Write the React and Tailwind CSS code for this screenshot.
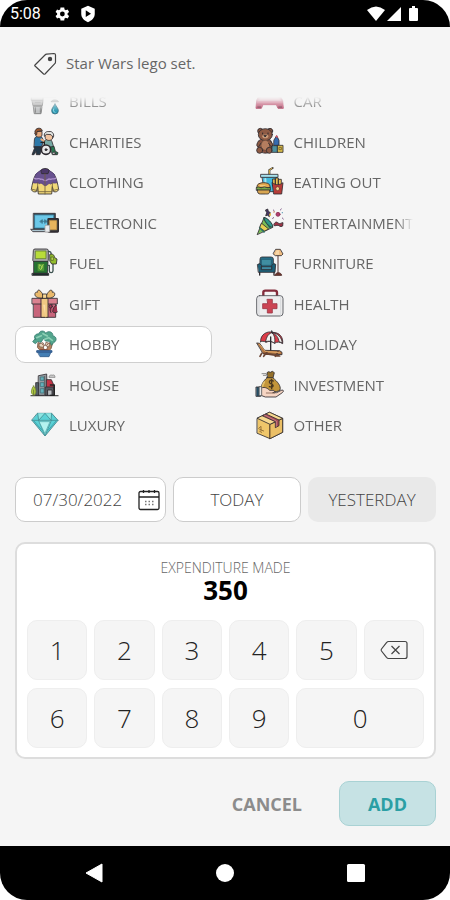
import { useState } from "react";

const art = {
  bills: (
    <>
      <path d="M38 30h36" stroke="#999" strokeWidth="3" />
      <path d="M2 24h34v16H2z" fill="#c8c8c8" stroke="#666" />
      <path d="M4 40h32l-2 16H7z" fill="#a5a5a5" stroke="#666" />
      <path d="M8 58h25l-3 22H11z" fill="#c0c2c3" stroke="#777" />
      <path d="M13 46h15M13 62v14M28 62v14" stroke="#777" />
      <path d="M61 43c3-6 18-6 21 0z" fill="#999" stroke="#777" />
      <path d="M72 51c-6 9-10 14-10 20a10 10 0 0 0 20 0c0-6-5-11-10-20z" fill="#2f9cb5" stroke="#3c6f80" />
      <path d="M68 66c-2 6 0 9 4 10" stroke="#a8e2ec" />
    </>
  ),
  charities: (
    <>
      <path d="M10 38c0-10 4-13 14-13s12 6 13 16l-6 17H10z" fill="#2d78a8" />
      <path d="M10 56h20v13l-3 11H16l-1-10-6 10H3l7-18z" fill="#253746" />
      <path d="M14 10h19v13c-5 6-13 6-18 1z" fill="#e5aa7e" />
      <path d="M12 13c-2-14 19-17 22-5l-16 3-1 9-5-2z" fill="#98572f" />
      <path d="M31 34l13 9" stroke="#e5aa7e" strokeWidth="6" />
      <path d="M42 37c6-6 18-5 21 4l5 16-11 5-17-1z" fill="#77a9a4" />
      <path d="M42 19c4-9 20-10 24 1l-2 13c-6 6-15 6-20 0z" fill="#f0c29e" />
      <path d="M40 24c-3-10 8-15 14-13 9-3 17 7 13 17l-7-8-13-1z" fill="#e5e7e4" />
      <path d="M58 57l11-2 4 15 8 4-2 6H65z" fill="#287650" />
      <path d="M30 43h10v17h17" stroke="#222" strokeWidth="4" />
      <circle cx="45" cy="65" r="14" fill="#e9e9e9" strokeWidth="5" />
      <circle cx="45" cy="65" r="3" fill="#222" />
      <circle cx="69" cy="76" r="4" fill="#ddd" />
    </>
  ),
  clothing: (
    <>
      <path d="M30 7l-15 11C8 28 3 50 1 65c3 6 9 8 15 6l4-15 2 22h40l2-22 4 15c6 2 12 0 15-6C81 50 76 28 69 18L54 7z" fill="#f0d878" />
      <path d="M29 7L15 18 6 44c8 3 14-2 20 3 8-5 10 6 17 6s9-10 16-5c6-6 12-1 19-4l-9-26L54 7z" fill="#68518f" stroke="#55417c" />
      <path d="M11 31c8 5 12-3 18 3 6-3 10 5 14 4 7 0 8-8 15-4 6-4 12 1 16-3" stroke="#ad91ca" strokeWidth="4" />
      <path d="M30 8c0-9 24-9 24 0l-3 9H33z" fill="#4b3768" />
      <path d="M42 18v60M20 44v26M64 44v26M22 71h40M4 64l12 3M80 64l-12 3" stroke="#71613c" />
    </>
  ),
  electronic: (
    <>
      <path d="M8 13h65v48H8z" fill="#344853" />
      <path d="M12 18h56v39H12z" fill="#6cc8e8" stroke="#3d86a3" />
      <path d="M0 61h73v7H7z" fill="#abc5d0" />
      <path d="M27 37l7-5v10zM48 37l-7-5v10zM34 37h12" fill="#3d7890" stroke="#3d7890" />
      <rect x="51" y="29" width="31" height="40" rx="2" fill="#393b3f" strokeWidth="4" />
      <path d="M56 35h21v27H56z" fill="#e7b45c" stroke="#c69648" />
      <rect x="42" y="49" width="14" height="20" rx="2" fill="#e9ebed" stroke="#aaa" />
    </>
  ),
  fuel: (
    <>
      <path d="M7 4q0-4 5-4h34q6 0 6 5v29l-3 5H9l-3-4z" fill="#aaa" />
      <path d="M14 6h31v23H14z" fill="#b8dc39" stroke="#64802d" />
      <path d="M9 37h42l-2 36H9z" fill="#267335" />
      <path d="M19 43h22v24H19z" fill="#4e9936" stroke="#2c6c2c" />
      <path d="M25 48c11 0 8 12 4 13-8-2-3-11-4-13m11-1c-5 6-1 8-6 14" stroke="#b9dc5d" />
      <path d="M4 73h49v6H4z" fill="#192d2b" />
      <path d="M52 7c8 0 8 3 9 11M51 49h4v17c0 6 10 7 11 0V45" stroke="#3d5250" strokeWidth="4" />
      <path d="M57 16c8-3 13 2 14 10l7 4-2 15H62l-5-8z" fill="#92bc2c" />
      <path d="M61 24h6v10h-6z" fill="#cae55c" stroke="#566a26" />
    </>
  ),
  gift: (
    <>
      <path d="M8 40h66v42H8z" fill="#c8657b" />
      <path d="M4 25h75v17H4z" fill="#da8290" />
      <path d="M31 25h20v57H31z" fill="#f0c883" />
      <path d="M36 43h8v38" fill="#fadda8" stroke="#efc681" />
      <path d="M39 20C28-3 20-4 19 7c-8-3-9 8-5 12 7 6 19 7 27 2zm5 0C55-3 64-4 64 7c8-3 9 8 5 12-7 6-19 7-27 2z" fill="#e9b96b" />
      <path d="M36 12h11v13H36z" fill="#f6d795" />
      <path d="M63 43c-7 8-8 19-3 25M77 45c-8 4-11 10-12 20 4 5 11 4 14 1" fill="#9f334e" />
      <circle cx="59" cy="49" r="5" fill="#ad3959" />
    </>
  ),
  hobby: (
    <>
      <path d="M22 35l12 3 5 18h8l7-20 12-3-6 20-7 7H29l-9-10z" fill="#b9845f" stroke="#72533f" />
      <path d="M14 25C4 19 15 6 24 9 25-5 45 0 43 7 53-3 68 4 65 14c14 3 12 17 4 20l-8 9-5-12-13-1-5-8-8 12-9-3-8 7-8-6 9-11z" fill="#53a58d" stroke="#377e72" />
      <path d="M17 20l14-6m5-6l13 7m-8 10l12-5 11 8" stroke="#8dd0b5" strokeWidth="5" />
      <path d="M25 38l11-3 5 9-7 5-9-2zm21-4l11 4-4 10-9-4z" fill="#e5d4bc" stroke="#7e6352" />
      <path d="M28 55l24 2M34 39l3 4M51 38l-4 5" stroke="#7b3e34" />
      <path d="M19 60h42l-7 17H28z" fill="#437eb4" stroke="#315c8b" />
      <path d="M18 59h45v5H18z" fill="#3967a4" stroke="#315c8b" />
    </>
  ),
  house: (
    <>
      <path d="M0 74h81" stroke="#555" strokeWidth="4" />
      <path d="M23 14l24-5 2 64H22z" fill="#969da3" />
      <path d="M15 35h8v38h-8z" fill="#535e67" />
      <path d="M29 18h10v10H29zm0 17h10v12H29zm0 18h10v13H29z" fill="#64b1bb" stroke="#41737c" />
      <path d="M41 16v56" stroke="#555" />
      <path d="M47 26h14l7 15v14H47z" fill="#c33446" />
      <path d="M44 48h24v25H44z" fill="#565960" />
      <path d="M51 57h12v16H51z" fill="#b9bcc0" />
      <path d="M58 42h12v31H58" stroke="#222" strokeWidth="4" />
      <path d="M8 45c-9 10-9 26 0 26s9-16 0-26z" fill="#b3cb43" stroke="#71862f" />
      <path d="M8 57v17" stroke="#5f7031" />
      <path d="M54 18c0-5 6-8 9-5 6-3 9 0 9 5z" fill="#ccc" stroke="#888" />
    </>
  ),
  luxury: (
    <>
      <path d="M20 4h42l19 21-39 47L3 25z" fill="#5bd1d5" stroke="#427e85" />
      <path d="M20 4l3 21L42 4l18 21 2-21M3 25h78M23 25l19 47 19-47" fill="#8ce5e2" stroke="#438e94" />
      <path d="M25 29h32L42 64z" fill="#b5f3ef" stroke="#5aaeb1" />
      <path d="M9 27l23 27M75 27L52 54" stroke="#379ea8" />
    </>
  ),
  car: (
    <>
      <path d="M10 25h62l8 16 2 23H66l-5-11H21l-5 11H0l2-23z" fill="#c4476b" stroke="#a83558" />
      <path d="M15 30h52l8 11H7z" fill="#dc93a7" stroke="#cd7f95" />
      <path d="M2 48h78v6H2z" fill="#b83b5e" stroke="none" />
      <path d="M4 56h11v7H4zm63 0h11v7H67z" fill="#853049" stroke="none" />
    </>
  ),
  children: (
    <>
      <circle cx="13" cy="9" r="8" fill="#86543f" />
      <circle cx="42" cy="9" r="8" fill="#86543f" />
      <path d="M12 35C5 43 4 58 9 67c9 11 28 11 36 1 6-10 5-24-3-33z" fill="#875241" />
      <ellipse cx="28" cy="20" rx="21" ry="18" fill="#8f5b44" />
      <ellipse cx="28" cy="52" rx="13" ry="15" fill="#b57d5f" stroke="#76503d" />
      <path d="M8 38c-8 11-7 19 0 18l7-11m28-6c9 9 9 15 2 17l-7-10" fill="#8d5a43" />
      <circle cx="11" cy="67" r="9" fill="#8f5b44" />
      <circle cx="40" cy="67" r="9" fill="#8f5b44" />
      <ellipse cx="28" cy="25" rx="9" ry="6" fill="#c99a78" stroke="none" />
      <path d="M20 15v3m16-3v3M25 22h6l-3 4z" strokeWidth="3" />
      <path d="M54 36l8-13 7 14v15H54z" fill="#366bb0" />
      <path d="M58 27l4-6 5 8z" fill="#dc4e60" stroke="none" />
      <path d="M49 53h17v20H49z" fill="#4c91a0" />
      <path d="M65 52h16v21H65z" fill="#dbbf4c" />
      <path d="M70 58h6v7h-6z" stroke="#735b2a" />
    </>
  ),
  eating: (
    <>
      <path d="M40 19V6l10-6" stroke="#333" strokeWidth="6" />
      <path d="M40 19V6l8-5" stroke="#e8ba4a" strokeWidth="3" />
      <path d="M19 26h43l-6 45H26z" fill="#42b9dc" />
      <path d="M15 19h51v9H15z" fill="#a7e1ed" />
      <path d="M28 33l2 30" stroke="#a8e4f0" strokeWidth="6" />
      <path d="M3 54c0-13 38-14 39 0v5H3z" fill="#e4a94e" />
      <path d="M2 58c8-5 11 5 18 0 8-5 12 5 23 0v9H2z" fill="#79a949" />
      <path d="M4 66h37c1 14-7 12-12 12H13c-6 0-9-3-9-12z" fill="#d8a651" />
      <path d="M12 53h15" stroke="#f7d895" />
      <path d="M51 33h7v21h-7zm8-3h8v23h-8zm9 4h8v21h-8z" fill="#ebc054" />
      <path d="M49 44c10 8 22 8 32 0l-4 34H54z" fill="#b63c39" />
      <circle cx="65" cy="62" r="6" fill="#eed38c" stroke="#82332e" />
    </>
  ),
  entertainment: (
    <>
      <path d="M4 76l20-50c13 4 22 14 26 28z" fill="#79bd54" />
      <path d="M17 43l21 17-12 6-15-9z" fill="#e6d052" />
      <path d="M12 57l12 12M24 29l18 27" stroke="#2d7166" strokeWidth="5" />
      <path d="M24 26c-3 8 20 34 26 28 4-7-20-33-26-28z" fill="#2e9887" />
      <path d="M29 3l6-3 2 7 6 4-3 12-5-4-6 1 3-8z" fill="#463763" />
      <path d="M40 14l5-2v8h-6z" fill="#e4bb4c" stroke="none" />
      <circle cx="66" cy="16" r="6" fill="#b23d6e" stroke="#8b3057" />
      <path d="M54 45c3-6 8-8 12-3 6 5 11-2 15-1l-1 10c-8 5-10-2-14-2-5 0-8 2-11 1z" fill="#9d3345" />
      <path d="M50 28l3-2M52 3l3 3M73 3l3-3M79 27l3 3" stroke="#7b5384" strokeWidth="3" />
      <circle cx="54" cy="9" r="2" fill="#d97d49" stroke="none" />
      <circle cx="79" cy="11" r="2" fill="#5699b5" stroke="none" />
    </>
  ),
  furniture: (
    <>
      <path d="M12 29q0-5 6-5h27q7 0 7 6v31H12z" fill="#26728b" />
      <path d="M17 31h29v18H17z" fill="#408ea1" stroke="#255a70" />
      <path d="M5 46q8-6 12 4v9h30v-9q5-10 12-4l-2 24H8z" fill="#1c6078" />
      <path d="M17 53h30v9H17z" fill="#408ba3" />
      <path d="M11 70v8m43-8v8" strokeWidth="4" />
      <path d="M66 19v55M57 79h20c-1-6-6-8-10-8s-9 2-10 8z" fill="#71352b" stroke="#583533" strokeWidth="3" />
      <path d="M60 1h13l8 14-5 5H58l-6-5z" fill="#efbd83" />
      <path d="M62 4h7v13H57z" fill="#f7d6a6" stroke="none" />
    </>
  ),
  health: (
    <>
      <path d="M22 18V7q0-5 6-5h28q7 0 7 6v10" stroke="#842d3c" strokeWidth="7" />
      <rect x="2" y="17" width="79" height="61" rx="9" fill="#ededee" stroke="#484b50" />
      <path d="M9 19v57M74 19v57" stroke="#d3d5d8" />
      <path d="M34 28h15v13h14v15H49v13H34V56H20V41h14z" fill="#cc4453" stroke="#9c3947" />
    </>
  ),
  holiday: (
    <>
      <path d="M14 32C12 10 34-1 49 4c22 0 33 14 31 34-9-6-17-6-24-1-10-7-19-7-25-3-8-4-13-4-17-2z" fill="#dc3c48" />
      <path d="M29 32C31 16 39 7 48 5c8 8 10 18 8 32-9-7-17-8-27-5z" fill="#f4f3f0" />
      <path d="M49 5c17 2 28 14 30 31l-10-4C68 20 60 10 49 5z" fill="#f1f0ec" />
      <path d="M44 18v50M49 5l-2-5" strokeWidth="4" />
      <path d="M3 36l8 1 15 21 45 1 7 5v7L22 68z" fill="#b77843" />
      <path d="M17 67l-5 9m11-9l48 8m-5-12l-8 13M35 61L23 76" stroke="#694332" strokeWidth="5" />
      <path d="M10 39l18 22 42 4" stroke="#e8b574" />
    </>
  ),
  investment: (
    <>
      <path d="M34 21L33 5l5-3 5 2 6-3 6 4-4 16z" fill="#94702a" />
      <path d="M33 20h17c14 11 26 25 22 37-5 8-49 8-55-1-4-11 4-25 16-36z" fill="#c2953b" />
      <path d="M25 33c-5 8-7 16-5 22" stroke="#e3bf69" strokeWidth="5" />
      <path d="M52 30c-11-6-16 4-8 8 11 4 9 13-4 9m7-22v28" stroke="#4a3820" strokeWidth="4" />
      <path d="M18 8h12l5 6M22 13h8" stroke="#777" />
      <path d="M12 53c12-8 22-2 29 5h11c6 1 3 7-2 7h12l16-8c6 0 5 5 1 8L60 78H28L12 72z" fill="#f6d5c3" />
      <path d="M1 48h13v28H1z" fill="#234f67" />
      <path d="M10 47h7v27h-7z" fill="#e8e8e8" stroke="#555" />
      <path d="M31 66h25" stroke="#856353" />
    </>
  ),
  other: (
    <>
      <path d="M4 19L41 1l39 18v42L42 80 4 64z" fill="#efc66a" />
      <path d="M42 37l38-18v42L42 80z" fill="#ebbf66" />
      <path d="M4 19l38 18 38-18L41 1z" fill="#f7d990" />
      <path d="M20 11L30 6l39 18v17l-11 6V30z" fill="#a64c56" />
      <path d="M25 9l36 18v16" stroke="#cb8489" />
      <path d="M42 38v40M11 52l12 5M11 58l6 3" stroke="#876330" />
      <path d="M8 49l7-6v12" stroke="#876330" />
    </>
  ),
};

const categories = [
  ["BILLS", "bills"],
  ["CAR", "car"],
  ["CHARITIES", "charities"],
  ["CHILDREN", "children"],
  ["CLOTHING", "clothing"],
  ["EATING OUT", "eating"],
  ["ELECTRONIC", "electronic"],
  ["ENTERTAINMENT", "entertainment"],
  ["FUEL", "fuel"],
  ["FURNITURE", "furniture"],
  ["GIFT", "gift"],
  ["HEALTH", "health"],
  ["HOBBY", "hobby"],
  ["HOLIDAY", "holiday"],
  ["HOUSE", "house"],
  ["INVESTMENT", "investment"],
  ["LUXURY", "luxury"],
  ["OTHER", "other"],
];

function StatusBar() {
  return (
    <header className="flex h-[27px] items-center bg-black pr-[31px] pl-[10px] text-white">
      <span className="font-[Roboto,sans-serif] text-base leading-5">5:08</span>
      <svg viewBox="0 0 24 24" className="ml-3 size-[18px]" fill="currentColor" aria-hidden="true">
        <path
          fillRule="evenodd"
          d="M19.4 13a7 7 0 0 0 0-2l2.1-1.6-2-3.5-2.5 1a8 8 0 0 0-1.7-1L15 3.2h-5l-.4 2.7a8 8 0 0 0-1.7 1l-2.5-1-2 3.5L5.5 11a7 7 0 0 0 0 2l-2.1 1.6 2 3.5 2.5-1a8 8 0 0 0 1.7 1l.4 2.7h5l.3-2.7a8 8 0 0 0 1.7-1l2.5 1 2-3.5zM12.500 15.2a3.2 3.2 0 1 1 0-6.4 3.2 3.2 0 0 1 0 6.4z"
        />
      </svg>
      <svg viewBox="0 0 24 24" className="ml-2 size-[18px]" fill="currentColor" aria-hidden="true">
        <path fillRule="evenodd" d="M12 1l9 4v7c0 5-4 9-9 11-5-2-9-6-9-11V5zM9 7v9l7-4.5z" />
      </svg>
      <svg viewBox="0 0 52 16" className="ml-auto h-4 w-[52px]" fill="currentColor" aria-hidden="true">
        <path d="M0 4Q9-3 18 4L9 15z" />
        <path d="M34 1v14H20z" />
        <path d="M42 3q0-1 1-1h2V0h3v2h2q1 0 1 1v11q0 1-1 1h-7q-1 0-1-1z" />
      </svg>
    </header>
  );
}

function Category({ label, icon, selected, onSelect }) {
  return (
    <button
      type="button"
      aria-pressed={selected}
      onClick={onSelect}
      className={`flex min-w-0 items-center gap-[10px] rounded-[10px] border pr-[22px] pl-[15px] text-left ${
        selected ? "border-[#cfcfcf] bg-white" : "border-transparent"
      }`}
    >
      <svg
        viewBox="0 0 84 84"
        className="size-7 shrink-0 overflow-visible"
        fill="none"
        stroke="#2f2b30"
        strokeWidth="2.5"
        strokeLinejoin="round"
        strokeLinecap="round"
        aria-hidden="true"
      >
        {art[icon]}
      </svg>
      <span className="min-w-0 flex-1 overflow-hidden whitespace-nowrap [mask-image:linear-gradient(to_right,black_calc(100%-16px),transparent)]">
        {label}
      </span>
    </button>
  );
}

function Key({ children, className = "", ...rest }) {
  return (
    <button
      type="button"
      className={`flex h-[60px] items-center justify-center rounded-[10px] border border-[#eeeeee] bg-[#f5f5f5] text-[26px] font-light text-[#222] ${className}`}
      {...rest}
    >
      {children}
    </button>
  );
}

export default function App() {
  const [selected, setSelected] = useState("HOBBY");
  const [amount, setAmount] = useState("350");
  const [note, setNote] = useState("Star Wars lego set.");
  const [date, setDate] = useState("07/30/2022");
  const press = (digit) => setAmount((value) => value + digit);

  return (
    <div className="min-h-screen bg-white">
      <div className="flex min-h-screen flex-col overflow-hidden rounded-[27px] bg-[#f5f5f5] font-['Open_Sans','Noto_Sans',sans-serif]">
        <StatusBar />
        <main className="flex flex-1 flex-col pr-[14px] pl-[15px]">
          <label className="mt-6 flex h-6 items-center gap-2 pl-[19px]">
            <svg
              viewBox="0 0 24 24"
              className="size-6 shrink-0"
              fill="none"
              stroke="#444"
              strokeWidth="1.2"
              strokeLinejoin="round"
              role="img"
              aria-label="Description"
            >
              <path d="M1 14L11 4q.7-.7 1.600-.8L20 2.500q1.500 0 1.500 1.500V11q0 1-.7 1.700L11 23q-.7.5-1.400 0L1 15q-.5-.5 0-1z" />
              <circle cx="16" cy="8" r="1.600" fill="#444" />
            </svg>
            <input
              type="text"
              value={note}
              onChange={(event) => setNote(event.target.value)}
              className="min-w-0 flex-1 bg-transparent text-[15px] leading-6 text-[#666] outline-none"
            />
          </label>

          <section
            aria-label="Category"
            className="mt-[22px] flex h-[347px] flex-col justify-end overflow-hidden [mask-image:linear-gradient(to_bottom,transparent,black_14px)]"
          >
            <div className="grid h-[361px] shrink-0 grid-cols-2 grid-rows-9 gap-x-7 gap-y-1 text-[15px] text-[#666]">
              {categories.map(([label, icon]) => (
                <Category
                  key={label}
                  label={label}
                  icon={icon}
                  selected={selected === label}
                  onSelect={() => setSelected(label)}
                />
              ))}
            </div>
          </section>

          <div className="mt-[33px] grid grid-cols-[151fr_128fr_128fr] gap-[7px] text-[17px] font-light text-[#444]">
            <div className="flex h-[45px] min-w-0 items-center rounded-[10px] border border-[#cccccc] bg-white pr-[5px] pl-[17px]">
              <input
                type="text"
                aria-label="Date"
                value={date}
                onChange={(event) => setDate(event.target.value)}
                className="min-w-0 flex-1 bg-transparent outline-none"
              />
              <button type="button" aria-label="Open calendar" className="ml-2 shrink-0">
                <svg viewBox="0 0 22 22" className="size-[22px]" fill="none" stroke="#222" strokeWidth="1.3" aria-hidden="true">
                  <rect x="1" y="2.500" width="20" height="18" rx="1.500" />
                  <path d="M1 8h20M5.500 1v3M11 1v3M16.500 1v3" />
                  <path d="M7 12.500h9M7 15.500h9" stroke="#777" strokeDasharray="1.500 2" />
                </svg>
              </button>
            </div>
            <button type="button" className="h-[45px] rounded-[10px] border border-[#cccccc] bg-white">
              TODAY
            </button>
            <button type="button" className="h-[45px] rounded-[10px] bg-[#e9e9e9]">
              YESTERDAY
            </button>
          </div>

          <section className="mt-5 rounded-[10px] border-2 border-[#dddddd] bg-white px-[10px] pt-4 pb-[9px]">
            <div className="flex flex-col items-center">
              <span className="text-sm leading-4 font-light text-[#666]">EXPENDITURE MADE</span>
              <output aria-label="Amount" className="text-[26px] leading-7 font-bold text-black">
                {amount}
              </output>
            </div>
            <div className="mt-4 grid grid-cols-6 gap-x-[7px] gap-y-2">
              {["1", "2", "3", "4", "5"].map((digit) => (
                <Key key={digit} onClick={() => press(digit)}>
                  {digit}
                </Key>
              ))}
              <Key aria-label="Delete last digit" onClick={() => setAmount((value) => value.slice(0, -1))}>
                <svg viewBox="0 0 28 20" className="h-5 w-7" fill="none" stroke="#444" strokeWidth="1.2" strokeLinejoin="round" aria-hidden="true">
                  <path d="M8.500 1.500H25q2 0 2 2v13q0 2-2 2H8.500q-1 0-2-1.200L1.500 11q-.7-1 0-2l5-6.300q1-1.200 2-1.200z" />
                  <path d="M11.500 6l8 8M19.500 6l-8 8" />
                </svg>
              </Key>
              {["6", "7", "8", "9"].map((digit) => (
                <Key key={digit} onClick={() => press(digit)}>
                  {digit}
                </Key>
              ))}
              <Key className="col-span-2" onClick={() => press("0")}>
                0
              </Key>
            </div>
          </section>

          <div className="mt-[22px] mb-5 flex justify-end gap-[22px] text-lg font-bold">
            <button type="button" className="h-[45px] px-[15px] text-[#8c8c8c]">
              CANCEL
            </button>
            <button type="button" className="h-[45px] w-[97px] rounded-[10px] border border-[#a9d2d4] bg-[#c6e2e4] text-[#2b9fa4]">
              ADD
            </button>
          </div>
        </main>

        <nav aria-label="System" className="flex h-[54px] items-center justify-between bg-black px-[84px] text-white">
          <button type="button" aria-label="Back">
            <svg viewBox="0 0 20 20" className="size-5" fill="currentColor" stroke="currentColor" strokeLinejoin="round" aria-hidden="true">
              <path d="M18 1v18L2 10z" />
            </svg>
          </button>
          <button type="button" aria-label="Home">
            <svg viewBox="0 0 20 20" className="size-5" fill="currentColor" aria-hidden="true">
              <circle cx="10" cy="10" r="9" />
            </svg>
          </button>
          <button type="button" aria-label="Recent apps">
            <svg viewBox="0 0 20 20" className="size-5" fill="currentColor" aria-hidden="true">
              <rect x="1" y="1" width="18" height="18" rx="1.5" />
            </svg>
          </button>
        </nav>
      </div>
    </div>
  );
}
